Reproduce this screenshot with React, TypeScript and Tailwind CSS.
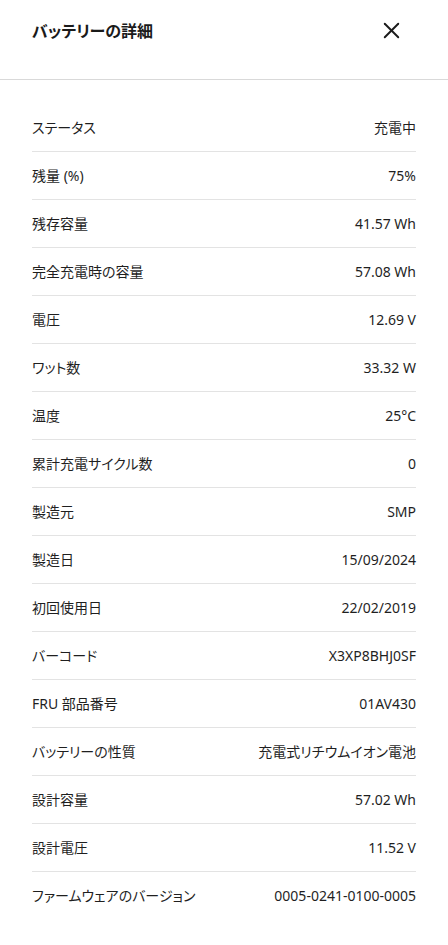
import { X } from 'lucide-react'

const ROWS: [string, string][] = [
  ['ステータス', '充電中'],
  ['残量 (%)', '75%'],
  ['残存容量', '41.57 Wh'],
  ['完全充電時の容量', '57.08 Wh'],
  ['電圧', '12.69 V'],
  ['ワット数', '33.32 W'],
  ['温度', '25°C'],
  ['累計充電サイクル数', '0'],
  ['製造元', 'SMP'],
  ['製造日', '15/09/2024'],
  ['初回使用日', '22/02/2019'],
  ['バーコード', 'X3XP8BHJ0SF'],
  ['FRU 部品番号', '01AV430'],
  ['バッテリーの性質', '充電式リチウムイオン電池'],
  ['設計容量', '57.02 Wh'],
  ['設計電圧', '11.52 V'],
  ['ファームウェアのバージョン', '0005-0241-0100-0005'],
]

export default function App() {
  return (
    <div
      className="w-[448px] h-[945px] bg-white text-[#1f1f1f] overflow-hidden [font-feature-settings:'palt']"
      style={{ fontFamily: "'Noto Sans', 'Noto Sans CJK JP', sans-serif" }}
    >
      {/* Header */}
      <header className="h-[80px] border-b border-[#d9d9d9] flex items-start justify-between pl-8 pr-[43px] pt-[19px]">
        <h1 className="text-base font-bold leading-6 text-[#1a1a1a]">バッテリーの詳細</h1>
        <button aria-label="閉じる" className="-mt-[2px] text-[#1a1a1a]">
          <X size={27} strokeWidth={1.7} />
        </button>
      </header>

      {/* Detail rows */}
      <div className="px-8 pt-6">
        {ROWS.map(([label, value], i) => (
          <div
            key={label}
            className={
              i < ROWS.length - 1
                ? 'h-12 flex items-center justify-between border-b border-[#e3e3e3] text-sm'
                : 'h-12 flex items-center justify-between text-sm'
            }
          >
            <span>{label}</span>
            <span>{value}</span>
          </div>
        ))}
      </div>
    </div>
  )
}
